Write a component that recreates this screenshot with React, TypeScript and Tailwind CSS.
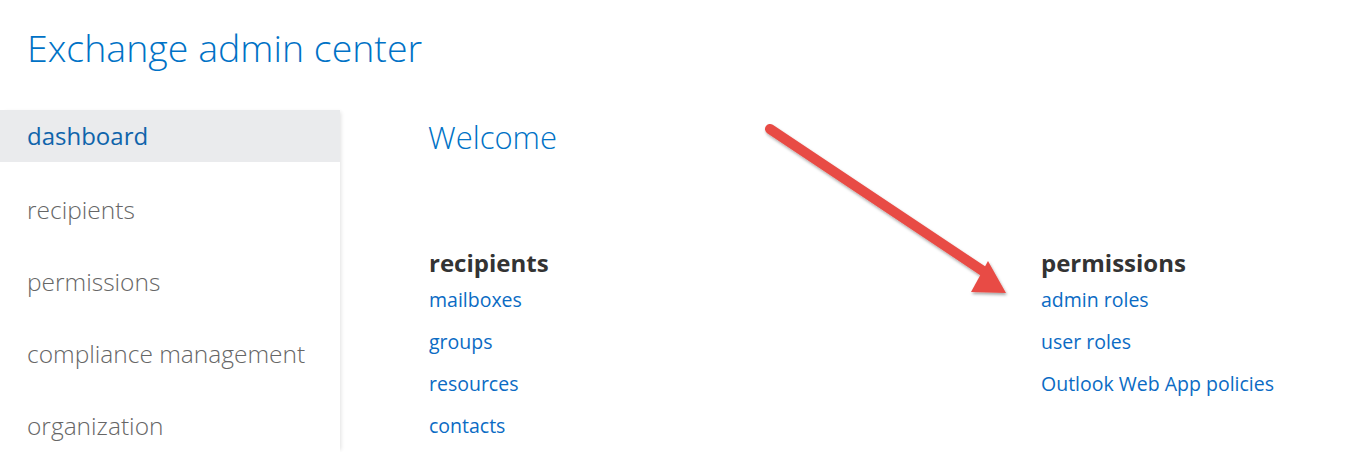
import * as React from "react";

const FONT = { fontFamily: '"Open Sans", "Noto Sans", sans-serif' };

const navItems = ["dashboard", "recipients", "permissions", "compliance management", "organization"];

const sections = [
  { title: "recipients", links: ["mailboxes", "groups", "resources", "contacts"] },
  { title: "permissions", links: ["admin roles", "user roles", "Outlook Web App policies"] },
];

export default function App() {
  return (
    <div className="relative h-[452px] w-[1346px] overflow-hidden bg-white" style={FONT}>
      <header className="h-[110px] pl-[27px] pt-[22px]">
        <h1 className="text-[37.5px] font-light leading-[52px] text-[#0072c6]">Exchange admin center</h1>
      </header>

      <div className="flex">
        <nav className="h-[342px] w-[340px] shrink-0 shadow-[3px_0_4px_-2px_rgba(0,0,0,0.12)]">
          {navItems.map((item, i) => (
            <div
              key={item}
              className={
                i === 0
                  ? "flex h-[52px] items-center bg-[#eaebed] pl-[27px] text-[24px] text-[#0f64ab]"
                  : "flex h-[72px] items-center pl-[27px] pt-[24px] text-[24.5px] font-light text-[#666]"
              }
            >
              {item}
            </div>
          ))}
        </nav>

        <main className="flex-1 pl-[88px] pt-[7px]">
          <h2 className="text-[31px] font-light leading-[40px] text-[#0072c6]">Welcome</h2>
          <div className="mt-[90px] grid grid-cols-[612px_1fr]">
            {sections.map((s) => (
              <div key={s.title} className="pl-px">
                <div className="text-[24px] font-bold leading-[32px] text-[#333]">{s.title}</div>
                <ul className="mt-[7px] flex flex-col">
                  {s.links.map((l) => (
                    <li key={l} className="h-[42px] text-[19.5px] leading-[28px] text-[#0b6bc4]">
                      {l}
                    </li>
                  ))}
                </ul>
              </div>
            ))}
          </div>
        </main>
      </div>

      {/* annotation arrow */}
      <svg className="pointer-events-none absolute left-0 top-0" width="1346" height="452">
        <defs>
          <filter id="sh" x="-10%" y="-10%" width="130%" height="130%">
            <feDropShadow dx="1" dy="2" stdDeviation="1.5" floodColor="#000" floodOpacity="0.35" />
          </filter>
        </defs>
        <g filter="url(#sh)">
          <line x1="770" y1="129" x2="983" y2="271" stroke="#e84c45" strokeWidth="10" strokeLinecap="round" />
          <polygon points="988,261 1006,293 971,292" fill="#e84c45" />
        </g>
      </svg>
    </div>
  );
}
